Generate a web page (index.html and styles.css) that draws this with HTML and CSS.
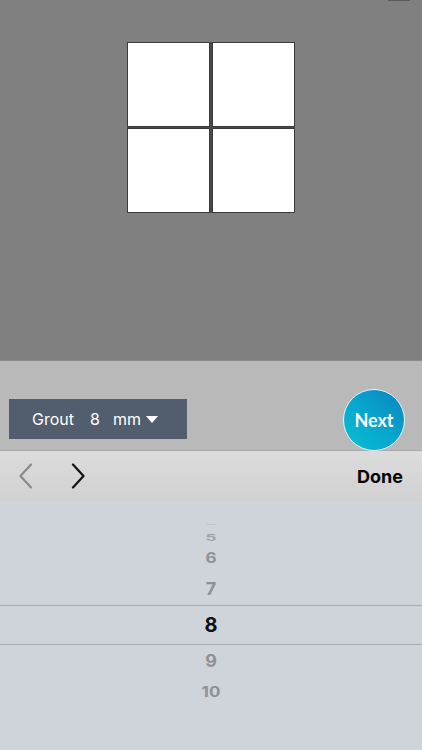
FILE: index.html
```html
<!DOCTYPE html>
<html>
<head>
<meta charset="utf-8">
<link rel="stylesheet" href="styles.css">
</head>
<body>
<div class="app">
  <div class="canvas">
    <div class="notch"></div>
    <div class="tiles">
      <div class="tile"></div>
      <div class="tile"></div>
      <div class="tile"></div>
      <div class="tile"></div>
    </div>
  </div>
  <div class="band">
    <div class="grout">
      <span class="lbl">Grout</span>
      <span class="val">8</span>
      <span class="unit">mm</span>
      <span class="tri"></span>
    </div>
    <div class="next">Next</div>
  </div>
  <div class="toolbar">
    <svg class="chev" width="16" height="26" viewBox="0 0 16 26"><path d="M13 1.5 L2.5 13 L13 24.5" fill="none" stroke="#8a8a8a" stroke-width="2.2" stroke-linecap="round" stroke-linejoin="round"/></svg>
    <svg class="chev fwd" width="16" height="26" viewBox="0 0 16 26"><path d="M3 1.5 L13.5 13 L3 24.5" fill="none" stroke="#111" stroke-width="2.2" stroke-linecap="round" stroke-linejoin="round"/></svg>
    <span class="done">Done</span>
  </div>
  <div class="picker">
    <div class="row r4"><span>—</span></div>
    <div class="row r5"><span>5</span></div>
    <div class="row r6"><span>6</span></div>
    <div class="row r7"><span>7</span></div>
    <div class="row r8"><span>8</span></div>
    <div class="row r9"><span>9</span></div>
    <div class="row r10"><span>10</span></div>
  </div>
</div>
</body>
</html>
```
FILE: styles.css
```css
* { box-sizing: border-box; }
html, body { margin: 0; padding: 0; }
body { width: 422px; height: 750px; overflow: hidden; font-family: Inter, "Liberation Sans", Arial, sans-serif; }
.app { display: flex; flex-direction: column; height: 750px; }

.canvas { height: 361px; background: #808080; position: relative; display: flex; justify-content: center; padding-top: 42px; border-bottom: 1px solid #8a8a8a; }
.notch { position: absolute; top: 0; left: 388px; width: 22px; height: 1px; background: #5a5a5a; }
.tiles { display: grid; grid-template-columns: 83px 83px; grid-template-rows: 85px 85px; column-gap: 2px; row-gap: 1px; background: #4a4a4a; width: 168px; height: 171px; }
.tile { background: #fff; border: 1px solid #3a3a3a; }

.band { height: 89px; background: #b9b9b9; display: flex; align-items: flex-end; justify-content: space-between; padding: 0 17px 0 9px; }
.grout { width: 178px; height: 40px; margin-bottom: 11px; background: #525d6d; color: #fff; display: flex; align-items: center; padding-left: 23px; font-size: 16px; }
.grout .val { margin-left: 16px; }
.grout .unit { margin-left: 13px; }
.tri { width: 0; height: 0; border-left: 6px solid transparent; border-right: 6px solid transparent; border-top: 7px solid #fff; margin-left: 5px; }
.next { width: 62px; height: 62px; border-radius: 50%; transform: translateY(1px); border: 1.5px solid #e6f4f8; background: linear-gradient(45deg, #08c0d4 0%, #07a6cc 50%, #0c83c0 100%); color: #fff; display: flex; align-items: center; justify-content: center; font-family: Lato, "Open Sans", sans-serif; font-weight: 700; font-size: 18px; position: relative; z-index: 2; }

.toolbar { height: 51px; background: linear-gradient(#dcdcdc, #d1d1d1); border-top: 1px solid #a9a9a9; display: flex; align-items: center; padding: 0 19px 0 18px; }
.chev.fwd { margin-left: 36px; }
.done { margin-left: auto; font-weight: 700; font-size: 18px; color: #000; }

.picker { flex: 1; background: #cfd3da; display: flex; flex-direction: column; padding-top: 17px; }
.row { display: flex; align-items: center; justify-content: center; font-weight: 700; color: #8e9096; font-size: 17px; }
.row span { display: block; line-height: 1; }
.r4 { height: 12px; }
.r4 span { font-size: 10px; transform: scaleY(0.3); color: #a6a9ae; }
.r5 { height: 14px; }
.r5 span { transform: scaleY(0.55); color: #9ea1a6; }
.r6 { height: 28px; }
.r6 span { transform: scaleY(0.85); }
.r7 { height: 33px; }
.r7 span { font-size: 18px; }
.r8 { height: 40px; border-top: 1px solid #a9adb3; border-bottom: 1px solid #a9adb3; color: #111; }
.r8 span { font-size: 20px; }
.r9 { height: 32px; }
.r9 span { font-size: 18px; transform: scaleY(0.93); }
.r10 { height: 31px; }
.r10 span { transform: scaleY(0.85); }
```
